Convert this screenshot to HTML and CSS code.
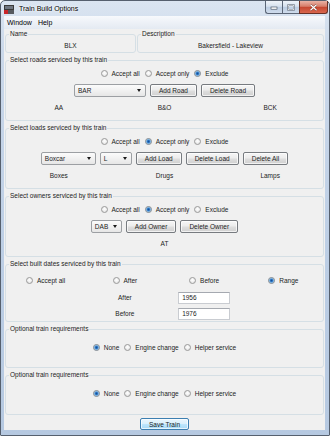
FILE: index.html
```html
<!DOCTYPE html>
<html lang="en">
<head>
<meta charset="utf-8">
<title>Train Build Options</title>
<link rel="stylesheet" href="styles.css">
</head>
<body>
<div class="window">
  <div class="titlebar">
    <svg class="appicon" width="10" height="9" viewBox="0 0 10 9">
      <rect x="0" y="0" width="10" height="5" fill="#3a3a3a"/>
      <rect x="1" y="1" width="8" height="3" fill="#6f7680"/>
      <rect x="0" y="5" width="4" height="4" fill="#c8262a"/>
      <rect x="4" y="5" width="6" height="4" fill="#55595f"/>
    </svg>
    <span class="title">Train Build Options</span>
    <div class="caption">
      <span class="cbtn cmin"><svg width="8" height="6" viewBox="0 0 8 6"><rect x="1" y="3" width="6" height="2.2" fill="#fff" stroke="#3b4657" stroke-width="0.6"/></svg></span>
      <span class="cbtn cmax"><svg width="8" height="7" viewBox="0 0 8 7"><rect x="1.2" y="1.2" width="5.6" height="4.6" fill="none" stroke="#3b4657" stroke-width="1.6"/><rect x="1.2" y="1.2" width="5.6" height="4.6" fill="none" stroke="#fff" stroke-width="0.8"/></svg></span>
      <span class="cbtn cclose"><svg width="9" height="7" viewBox="0 0 9 7"><path d="M1.5 0.8 L7.5 6.2 M7.5 0.8 L1.5 6.2" stroke="#6b2a20" stroke-width="2.2"/><path d="M1.5 0.8 L7.5 6.2 M7.5 0.8 L1.5 6.2" stroke="#fff" stroke-width="1.3"/></svg></span>
    </div>
  </div>
  <div class="client">
    <div class="menubar"><span class="menu">Window</span><span class="menu">Help</span></div>
    <div class="content">
      <div class="toprow">
        <fieldset class="panel pname"><legend>Name</legend><div class="value">BLX</div></fieldset>
        <fieldset class="panel pdesc"><legend>Description</legend><div class="value">Bakersfield - Lakeview</div></fieldset>
      </div>

      <fieldset class="panel sel">
        <legend>Select roads serviced by this train</legend>
        <div class="radios">
          <span class="opt"><span class="radio"></span>Accept all</span>
          <span class="opt"><span class="radio"></span>Accept only</span>
          <span class="opt"><span class="radio on"></span>Exclude</span>
        </div>
        <div class="controls">
          <span class="combo w-road">BAR<i class="arrow"></i></span>
          <span class="btn">Add Road</span>
          <span class="btn">Delete Road</span>
        </div>
        <div class="labels"><span>AA</span><span>B&amp;O</span><span>BCK</span></div>
      </fieldset>

      <fieldset class="panel sel">
        <legend>Select loads serviced by this train</legend>
        <div class="radios">
          <span class="opt"><span class="radio"></span>Accept all</span>
          <span class="opt"><span class="radio on"></span>Accept only</span>
          <span class="opt"><span class="radio"></span>Exclude</span>
        </div>
        <div class="controls">
          <span class="combo w-type">Boxcar<i class="arrow"></i></span>
          <span class="combo w-load">L<i class="arrow"></i></span>
          <span class="btn">Add Load</span>
          <span class="btn">Delete Load</span>
          <span class="btn">Delete All</span>
        </div>
        <div class="labels"><span>Boxes</span><span>Drugs</span><span>Lamps</span></div>
      </fieldset>

      <fieldset class="panel sel">
        <legend>Select owners serviced by this train</legend>
        <div class="radios">
          <span class="opt"><span class="radio"></span>Accept all</span>
          <span class="opt"><span class="radio on"></span>Accept only</span>
          <span class="opt"><span class="radio"></span>Exclude</span>
        </div>
        <div class="controls">
          <span class="combo w-owner">DAB<i class="arrow"></i></span>
          <span class="btn">Add Owner</span>
          <span class="btn">Delete Owner</span>
        </div>
        <div class="labels"><span></span><span>AT</span><span></span></div>
      </fieldset>

      <fieldset class="panel dates">
        <legend>Select built dates serviced by this train</legend>
        <div class="grid4 dradios">
          <span class="opt"><span class="radio"></span>Accept all</span>
          <span class="opt"><span class="radio"></span>After</span>
          <span class="opt"><span class="radio"></span>Before</span>
          <span class="opt"><span class="radio on"></span>Range</span>
        </div>
        <div class="grid4 drow first">
          <span class="c2">After</span>
          <span class="c3 field">1956</span>
        </div>
        <div class="grid4 drow">
          <span class="c2">Before</span>
          <span class="c3 field">1976</span>
        </div>
      </fieldset>

      <fieldset class="panel opt1">
        <legend>Optional train requirements</legend>
        <div class="radios oradios">
          <span class="opt"><span class="radio on"></span>None</span>
          <span class="opt"><span class="radio"></span>Engine change</span>
          <span class="opt"><span class="radio"></span>Helper service</span>
        </div>
      </fieldset>

      <fieldset class="panel opt2">
        <legend>Optional train requirements</legend>
        <div class="radios oradios">
          <span class="opt"><span class="radio on"></span>None</span>
          <span class="opt"><span class="radio"></span>Engine change</span>
          <span class="opt"><span class="radio"></span>Helper service</span>
        </div>
      </fieldset>

      <div class="footer"><span class="btn default">Save Train</span></div>
    </div>
  </div>
</div>
</body>
</html>
```

FILE: styles.css
```css
* { box-sizing: border-box; }
html, body { margin: 0; padding: 0; }
body {
  width: 330px;
  height: 436px;
  overflow: hidden;
  background: #ffffff;
  font-family: "Liberation Sans", Arial, sans-serif;
  font-size: 6.5px;
  color: #1c1c1c;
}

.window {
  width: 330px;
  height: 436px;
  display: flex;
  flex-direction: column;
  border: 1px solid #56606e;
  border-radius: 5px 5px 1px 1px;
  background: linear-gradient(180deg, #dbe5f1 0%, #cad8ea 12%, #bccee5 60%, #b6c9e1 100%);
}

/* title bar */
.titlebar {
  height: 15px;
  flex: 0 0 15px;
  display: flex;
  align-items: flex-start;
}
.appicon { margin: 4px 0 0 3px; flex: 0 0 auto; }
.title {
  margin: 4px 0 0 5px;
  font-size: 7px;
  line-height: 8px;
  color: #000;
  text-shadow: 0 0 3px #ffffff, 0 0 2px #ffffff;
}
.caption { margin-left: auto; margin-right: 1px; display: flex; }
.cbtn {
  height: 13px;
  display: flex;
  align-items: center;
  justify-content: center;
  border: 1px solid #5b6677;
  border-top: none;
}
.cmin {
  width: 17px;
  border-radius: 0 0 0 3px;
  border-right: none;
  background: linear-gradient(180deg, #eef3f9 0%, #d6e1ee 45%, #bccde2 50%, #cfdcec 100%);
}
.cmax {
  width: 17px;
  border-right: none;
  background: linear-gradient(180deg, #eef3f9 0%, #d6e1ee 45%, #bccde2 50%, #cfdcec 100%);
}
.cclose {
  width: 29px;
  border-radius: 0 0 3px 0;
  border-color: #6a3126;
  background: linear-gradient(180deg, #eab3a6 0%, #d77d69 45%, #c54630 50%, #d9674e 100%);
}

/* client area */
.client {
  flex: 1 1 auto;
  margin: 0 4px 5px 3px;
  background: #f0f0f0;
  display: flex;
  flex-direction: column;
}
.menubar {
  height: 13px;
  flex: 0 0 13px;
  display: flex;
  align-items: center;
  gap: 6px;
  padding-left: 3px;
  background: linear-gradient(180deg, #f7f9fc 0%, #edf1f7 50%, #e4eaf2 100%);
  font-size: 7px;
  color: #000;
}
.content {
  flex: 1 1 auto;
  padding: 0 1px;
  display: flex;
  flex-direction: column;
}

/* titled panels */
.panel {
  margin: 3px 0 0 0;
  padding: 0;
  min-width: 0;
  border: 1px solid #d5dfe5;
  border-radius: 3px;
}
.panel legend {
  margin-left: 3px;
  padding: 0 1px;
  height: 8px;
  line-height: 8px;
  color: #1c1c1c;
}

.toprow { display: flex; gap: 1px; margin-top: 1px; }
.toprow .panel { margin-top: 0; padding-bottom: 2px; }
.pname { width: 131px; flex: 0 0 131px; }
.pdesc { flex: 1 1 auto; }
.value { margin-top: 4px; height: 8px; line-height: 8px; text-align: center; }

.radios {
  height: 12px;
  display: flex;
  justify-content: center;
  align-items: center;
  gap: 5px;
}
.opt { display: inline-flex; align-items: center; gap: 4px; white-space: nowrap; }
.radio {
  width: 7px;
  height: 7px;
  flex: 0 0 7px;
  border-radius: 50%;
  border: 1px solid #9a9a9a;
  background: radial-gradient(circle at 50% 40%, #ffffff 0, #f3f3f3 40%, #d9d9d9 100%);
}
.radio.on {
  border-color: #7d8791;
  background: radial-gradient(circle at 50% 50%, #174f93 0, #2c74c4 1.2px, #7db7e6 2.1px, #e4ebf1 2.7px, #f7f7f7 100%);
}

.sel { padding-bottom: 7px; }
.sel .radios { margin-top: 3px; }
.controls {
  margin-top: 5px;
  height: 13px;
  display: flex;
  justify-content: center;
  align-items: stretch;
  gap: 4px;
}
.labels {
  margin-top: 6px;
  height: 10px;
  line-height: 10px;
  display: grid;
  grid-template-columns: repeat(3, 1fr);
  text-align: center;
}

.btn {
  height: 13px;
  padding: 0 8px;
  display: inline-flex;
  align-items: center;
  justify-content: center;
  white-space: nowrap;
  border: 1px solid #777b80;
  border-radius: 2px;
  background: linear-gradient(180deg, #f6f6f6 0%, #ececec 48%, #dedede 52%, #d0d0d0 100%);
  box-shadow: inset 0 0 0 1px rgba(255,255,255,0.7);
}
.btn.default {
  height: 12px;
  border-color: #3c7fb1;
  background: linear-gradient(180deg, #eaf6fd 0%, #d9f0fc 48%, #bee6fd 52%, #a7d9f5 100%);
}

.combo {
  height: 13px;
  padding: 0 4px 0 3px;
  display: inline-flex;
  align-items: center;
  justify-content: space-between;
  border: 1px solid #9c9fa3;
  border-radius: 2px;
  background: linear-gradient(180deg, #fbfbfb 0%, #f1f1f1 50%, #e6e6e6 100%);
}
.w-road { width: 72px; }
.w-type { width: 55px; }
.w-load { width: 32px; }
.w-owner { width: 31px; }
.arrow {
  width: 0;
  height: 0;
  border-left: 2.5px solid transparent;
  border-right: 2.5px solid transparent;
  border-top: 3px solid #1a1a1a;
}

/* dates */
.dates { padding-bottom: 1px; }
.grid4 { display: grid; grid-template-columns: repeat(4, 1fr); align-items: center; }
.dradios { margin-top: 6px; height: 12px; }
.dradios .opt { justify-self: center; }
.drow { height: 13px; margin-top: 3px; }
.drow.first { margin-top: 5px; }
.c2 { grid-column: 2; justify-self: center; }
.c3 { grid-column: 3; justify-self: center; }
.field {
  width: 52px;
  height: 12px;
  line-height: 10px;
  padding-left: 3px;
  background: #ffffff;
  border: 1px solid #c9ccd1;
  border-top-color: #a5a9b0;
}

/* optional */
.oradios { margin-top: 8px; }
.opt1 { padding-bottom: 14px; }
.opt2 { padding-bottom: 15px; }

.footer {
  margin-top: 3px;
  display: flex;
  justify-content: center;
}
```
